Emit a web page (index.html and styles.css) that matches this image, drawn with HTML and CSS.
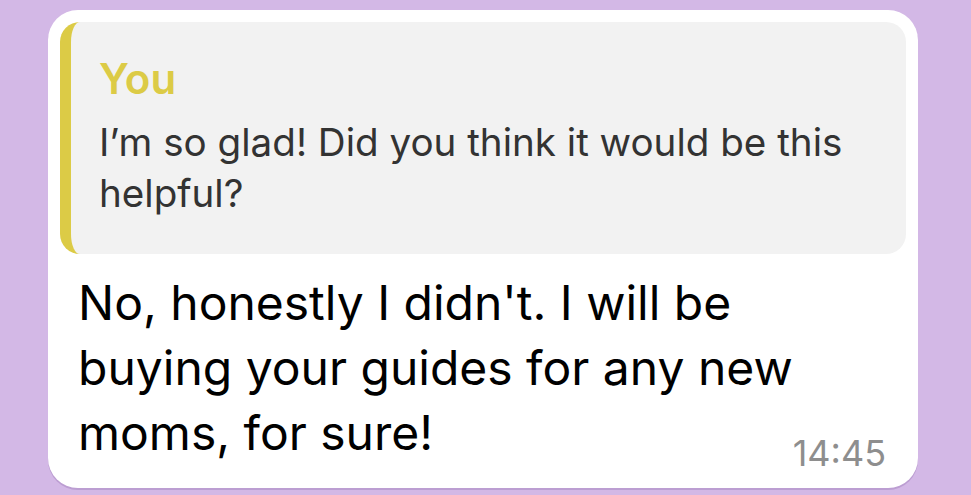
FILE: index.html
```html
<!DOCTYPE html>
<html>
<head>
<meta charset="utf-8">
<link rel="stylesheet" href="styles.css">
</head>
<body>
<div class="bubble">
  <div class="quote">
    <div class="author">You</div>
    <div class="quote-text">I’m so glad! Did you think it would be this<br>helpful?</div>
  </div>
  <div class="message">
    <div class="text">No, honestly I didn't. I will be<br>buying your guides for any new<br>moms, for sure!</div>
    <div class="time">14:45</div>
  </div>
</div>
</body>
</html>
```
FILE: styles.css
```css
html, body {
  margin: 0;
  padding: 0;
}
body {
  background: #d3b8e6;
  width: 971px;
  height: 495px;
  overflow: hidden;
  font-family: Inter, "Liberation Sans", sans-serif;
  padding-top: 10px;
  box-sizing: border-box;
}
.bubble {
  margin-left: 48px;
  width: 870px;
  height: 478px;
  box-sizing: border-box;
  background: #fff;
  border-radius: 30px;
  padding: 12px 12px 0 12px;
  box-shadow: 0 2px 0 rgba(120, 80, 150, 0.25);
}
.quote {
  background: #f2f2f2;
  border-left: 11px solid #dccb46;
  border-radius: 20px;
  height: 232px;
  box-sizing: border-box;
  padding: 35px 30px 0 28px;
}
.author {
  color: #dccb46;
  font-weight: 600;
  font-size: 42px;
  line-height: 44px;
}
.quote-text {
  color: #333;
  font-size: 38.6px;
  line-height: 51px;
  margin-top: 16px;
  white-space: nowrap;
}
.message {
  display: flex;
  justify-content: space-between;
  align-items: flex-end;
  padding: 16px 22px 0 18px;
}
.text {
  font-size: 48px;
  line-height: 65px;
  color: #000;
  white-space: nowrap;
}
.time {
  color: #8e8e8e;
  font-size: 36px;
  line-height: 36px;
  margin-bottom: -6px;
}
```
